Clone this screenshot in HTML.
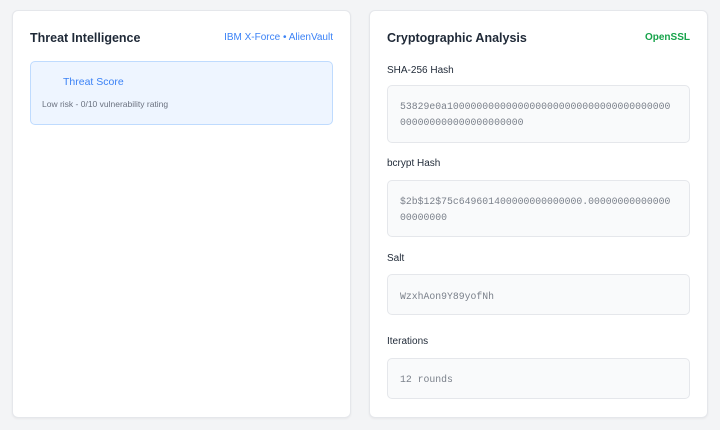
<!DOCTYPE html>
<html><head><style>
*{box-sizing:border-box;margin:0;padding:0}
body{width:720px;height:430px;background:#f3f4f6;font-family:"Liberation Sans",sans-serif;position:relative;overflow:hidden}
.card{position:absolute;top:10px;height:408px;background:#fff;border:1px solid #e5e7eb;border-radius:6px;box-shadow:0 1px 2px rgba(0,0,0,.05)}
.t{position:absolute;top:31px;font-size:12.5px;font-weight:bold;color:#1f2937}
.src{position:absolute;top:32px;font-size:10px;font-weight:bold}
.lbl{position:absolute;left:387px;font-size:10px;color:#1f2937}
.box{position:absolute;left:387px;width:303px;background:#f9fafb;border:1px solid #e5e7eb;border-radius:5px;padding:13px 12px 0;font-family:"Liberation Mono",monospace;font-size:9.8px;letter-spacing:0;color:#7b818b;line-height:16px;white-space:nowrap;overflow:hidden}
</style></head><body>
<div class="card" style="left:12px;width:339px"></div>
<div class="card" style="left:369px;width:339px"></div>
<div class="t" style="left:30px">Threat Intelligence</div>
<div class="src" style="right:387px;color:#3b82f6;font-weight:normal">IBM X-Force • AlienVault</div>
<div style="position:absolute;left:30px;top:61px;width:303px;height:64px;background:#eef5ff;border:1px solid #bfdbfe;border-radius:5px"></div>
<div style="position:absolute;left:63px;top:76px;font-size:10.5px;color:#3b82f6">Threat Score</div>
<div style="position:absolute;left:42px;top:99px;font-size:8.5px;color:#6b7280">Low risk - 0/10 vulnerability rating</div>
<div class="t" style="left:387px">Cryptographic Analysis</div>
<div class="src" style="right:30px;color:#16a34a">OpenSSL</div>
<div class="lbl" style="top:65px">SHA-256 Hash</div>
<div class="box" style="top:85px;height:58px">53829e0a10000000000000000000000000000000000000<br>000000000000000000000</div>
<div class="lbl" style="top:158px">bcrypt Hash</div>
<div class="box" style="top:180px;height:57px">$2b$12$75c649601400000000000000.00000000000000<br>00000000</div>
<div class="lbl" style="top:253px">Salt</div>
<div class="box" style="top:274px;height:41px;padding-top:14px">WzxhAon9Y89yofNh</div>
<div class="lbl" style="top:336px">Iterations</div>
<div class="box" style="top:358px;height:41px;padding-top:13px">12 rounds</div>
</body></html>
